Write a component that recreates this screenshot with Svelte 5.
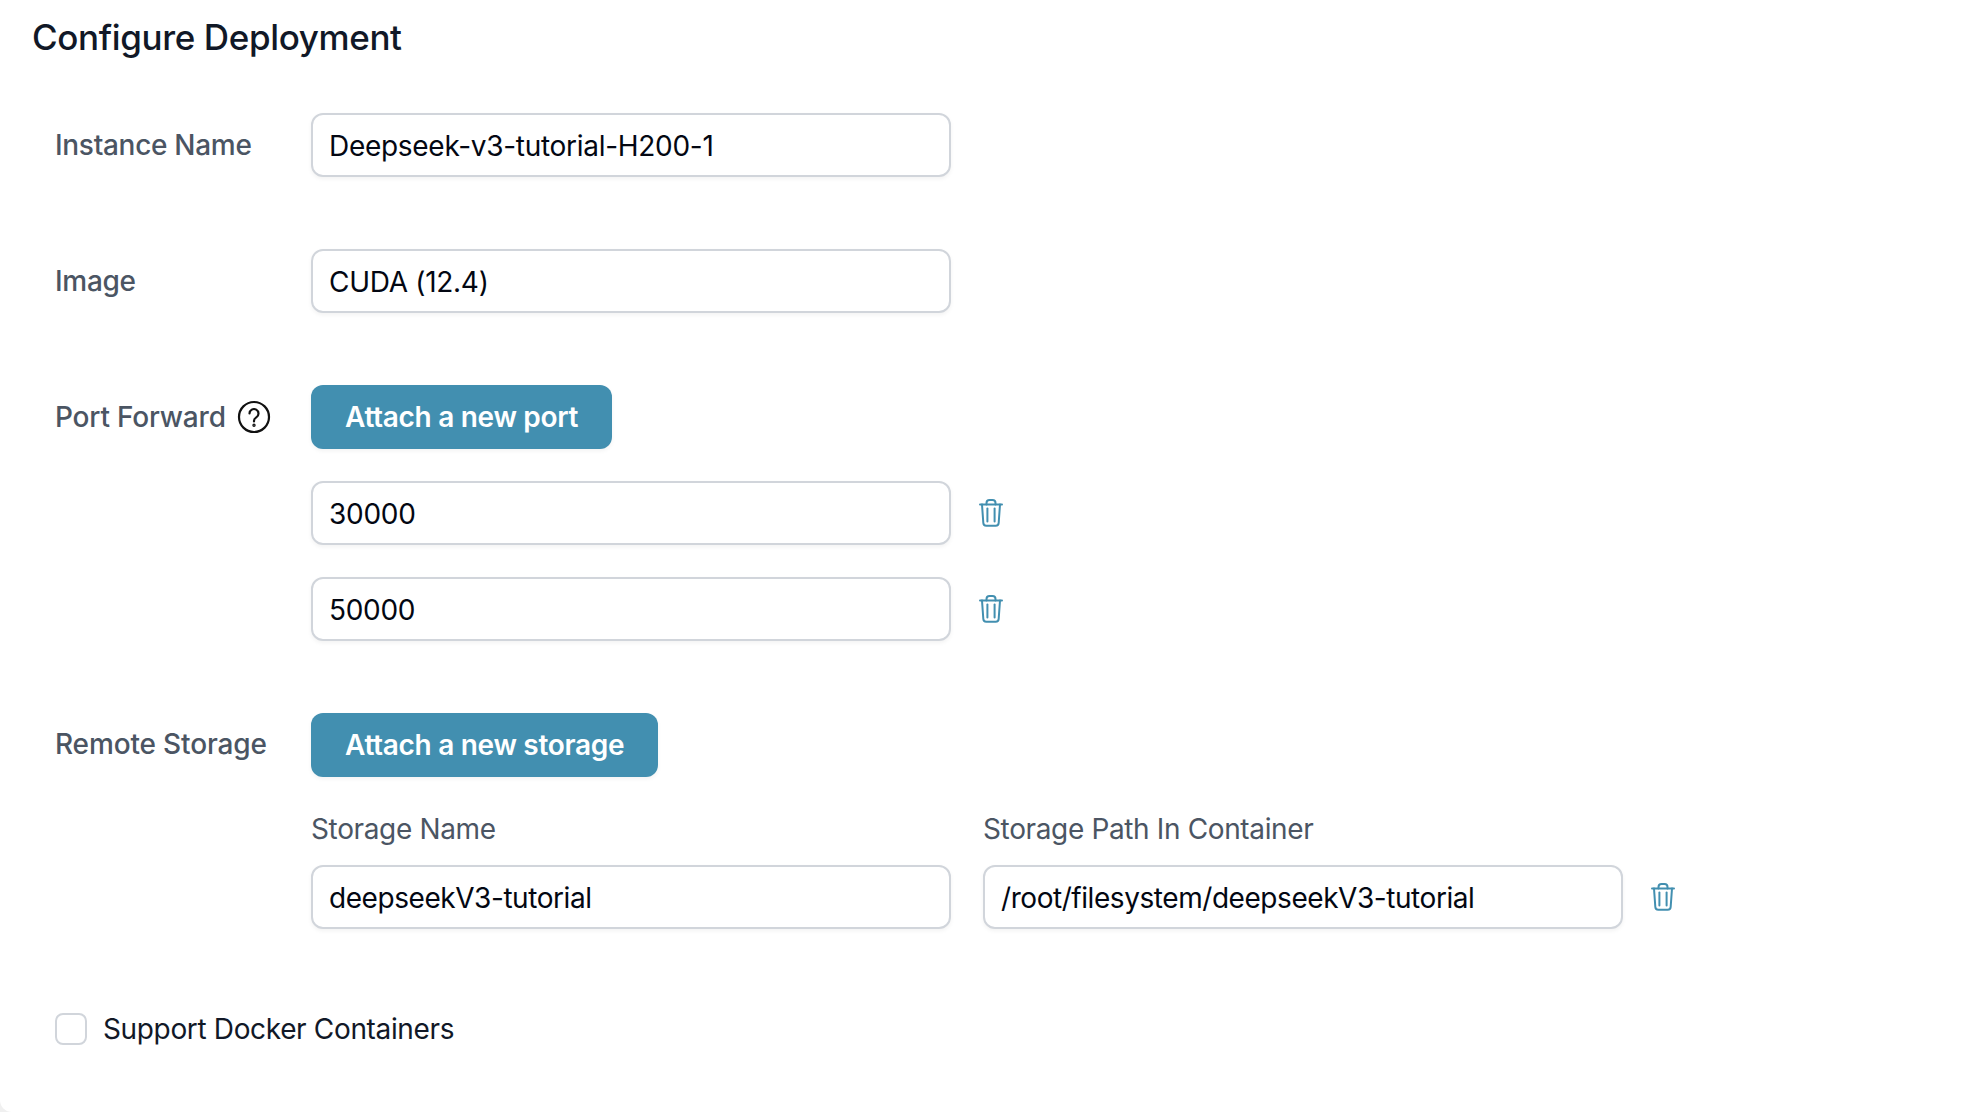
<script>
  let ports = $state(["30000", "50000"]);
  let instanceName = $state("Deepseek-v3-tutorial-H200-1");
  let image = $state("CUDA (12.4)");
  let storageName = $state("deepseekV3-tutorial");
  let storagePath = $state("/root/filesystem/deepseekV3-tutorial");
  let docker = $state(false);
</script>

{#snippet trash()}
  <button class="trash" aria-label="Remove">
    <svg width="32" height="32" viewBox="0 0 32 32" fill="none" stroke="#428fb0" stroke-width="2" stroke-linecap="round" stroke-linejoin="round">
      <path d="M5 7.5h22" />
      <path d="M11.5 7.5V6a3 3 0 0 1 3-3h3a3 3 0 0 1 3 3v1.500" />
      <path d="M7 7.500l1.300 18.300a3 3 0 0 0 3 2.900h9.400a3 3 0 0 0 3-2.900L25 7.500" />
      <path d="M12.400 11.500v13" />
      <path d="M19.600 11.500v13" />
    </svg>
  </button>
{/snippet}

<div class="page">
  <h2>Configure Deployment</h2>

  <form class="form">
    <div class="row">
      <span class="label">Instance Name</span>
      <div class="field"><input bind:value={instanceName} /></div>
    </div>

    <div class="row">
      <span class="label">Image</span>
      <div class="field"><input bind:value={image} /></div>
    </div>

    <div class="row">
      <span class="label port">
        Port Forward
        <svg class="help" width="34" height="34" viewBox="0 0 34 34" fill="none" stroke="#111" stroke-width="2.200" stroke-linecap="round">
          <circle cx="17" cy="17" r="15" />
          <path d="M12.500 13.500a4.500 4.500 0 1 1 6.800 3.900c-1.500.9-2.300 1.800-2.300 3.300v.8" />
          <circle cx="17" cy="25.300" r="0.600" fill="#111" />
        </svg>
      </span>
      <div class="stack">
        <button type="button" class="primary">Attach a new port</button>
        {#each ports as _, i}
          <div class="field">
            <input bind:value={ports[i]} />
            {@render trash()}
          </div>
        {/each}
      </div>
    </div>

    <div class="row">
      <span class="label raised">Remote Storage</span>
      <div class="storage">
        <button type="button" class="primary">Attach a new storage</button>
        <div class="storage-row">
          <label class="col">
            <span>Storage Name</span>
            <input class="tight" bind:value={storageName} />
          </label>
          <label class="col">
            <span>Storage Path In Container</span>
            <input class="tight" bind:value={storagePath} />
          </label>
          {@render trash()}
        </div>
      </div>
    </div>

    <label class="check">
      <input type="checkbox" bind:checked={docker} />
      <span>Support Docker Containers</span>
    </label>
  </form>
</div>

<style>
  :global(body) {
    background: #f0f0f0;
    font-family: Inter, "Liberation Sans", sans-serif;
  }

  .page {
    box-sizing: border-box;
    height: 1112px;
    overflow: hidden;
    padding: 15px 32px 0;
    background: #fff;
    border-bottom-left-radius: 12px;
  }

  h2 {
    margin: 0;
    font-size: 35px;
    line-height: 44px;
    font-weight: 500;
    letter-spacing: -0.37px;
    color: #111827;
  }

  .form {
    display: flex;
    flex-direction: column;
    gap: 72px;
    margin-top: 54px;
    padding-left: 23px;
  }

  .row {
    display: flex;
    align-items: flex-start;
  }

  .label {
    display: flex;
    align-items: center;
    gap: 11px;
    flex: 0 0 256px;
    height: 64px;
    font-size: 28px;
    font-weight: 500;
    letter-spacing: -0.3px;
    color: #4b5563;
  }

  .port {
    letter-spacing: -0.2px;
  }

  .raised {
    height: 62px;
    letter-spacing: -0.15px;
  }

  .field {
    display: flex;
    align-items: center;
  }

  .stack {
    display: flex;
    flex-direction: column;
    align-items: flex-start;
    gap: 32px;
  }

  input:not([type="checkbox"]) {
    box-sizing: border-box;
    width: 640px;
    height: 64px;
    padding: 2px 16px 0;
    border: 2px solid #d1d5db;
    border-radius: 12px;
    box-shadow: 0 2px 4px rgba(0, 0, 0, 0.05);
    background: #fff;
    font: 400 28px Inter, "Liberation Sans", sans-serif;
    letter-spacing: -0.29px;
    color: #030712;
    outline: none;
  }

  input.tight:not([type="checkbox"]) {
    letter-spacing: -0.44px;
  }

  .primary {
    height: 64px;
    padding: 0 34px;
    border: none;
    border-radius: 12px;
    background: #428fb0;
    box-shadow: 0 2px 4px rgba(0, 0, 0, 0.05);
    font: 600 28px Inter, "Liberation Sans", sans-serif;
    letter-spacing: -0.3px;
    color: #fff;
  }

  .trash {
    display: flex;
    margin-left: 24px;
    padding: 0;
    border: none;
    background: none;
  }

  .storage {
    display: flex;
    flex-direction: column;
    align-items: flex-start;
  }

  .storage-row {
    display: flex;
    align-items: flex-end;
    gap: 32px;
    margin-top: 32px;
  }

  .storage-row .trash {
    margin-left: -8px;
    margin-bottom: 16px;
  }

  .col {
    display: flex;
    flex-direction: column;
    gap: 16px;
    font-size: 28px;
    line-height: 40px;
    letter-spacing: -0.36px;
    color: #4b5563;
  }

  .check {
    display: flex;
    align-items: center;
    gap: 16px;
    margin-top: 11px;
    font-size: 28px;
    letter-spacing: -0.35px;
    color: #111827;
  }

  .check input {
    appearance: none;
    box-sizing: border-box;
    width: 32px;
    height: 32px;
    margin: 0;
    border: 2px solid #d1d5db;
    border-radius: 8px;
    background: #fff;
  }
</style>
